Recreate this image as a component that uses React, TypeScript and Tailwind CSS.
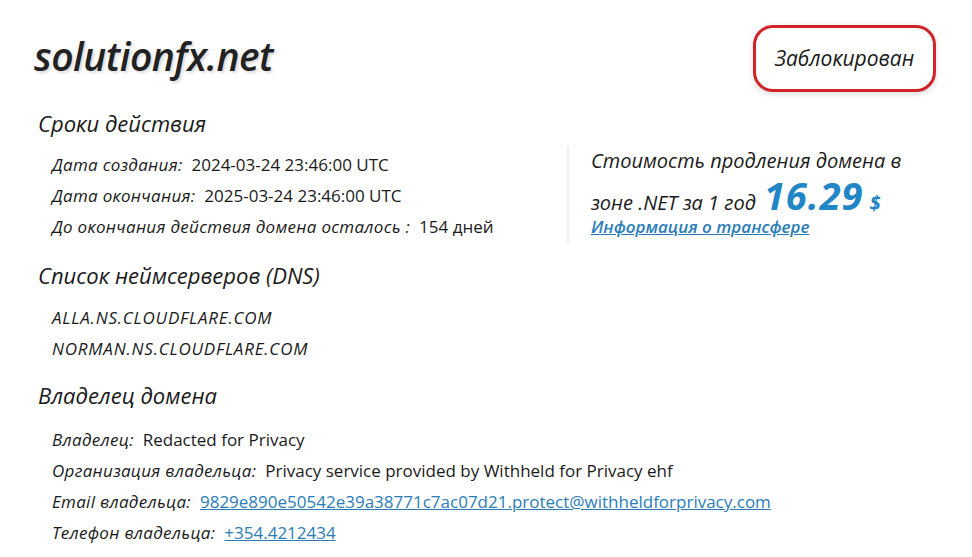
import React from 'react'

const font = { fontFamily: '"Open Sans", "Noto Sans", sans-serif' }

function Row({ label, children }: { label: string; children: React.ReactNode }) {
  return (
    <div className="flex h-[31px] items-center text-[17px] text-[#1a1a1a]">
      <span className="italic tracking-[0.3px]">{label}:</span>
      <span className="ml-[9px]">{children}</span>
    </div>
  )
}

export default function App() {
  return (
    <div className="h-[557px] w-[972px] overflow-hidden bg-white" style={font}>
      {/* Header */}
      <div className="flex items-start justify-between pl-[34px] pr-[36px] pt-[30px]">
        <h1 className="text-[39px] font-semibold italic leading-[52px] tracking-[-0.5px] text-[#222] [text-shadow:2px_2px_3px_rgba(0,0,0,0.15)]">
          solutionfx.net
        </h1>
        <div className="-mt-[5px] flex h-[67px] w-[183px] items-center justify-center rounded-[20px] border-[3px] border-[#d0242b] text-[21px] italic text-[#1a1a1a] shadow-[0_2px_6px_rgba(0,0,0,0.15)]">
          Заблокирован
        </div>
      </div>

      <div className="mt-[12px] flex pl-[38px]">
        {/* Left column */}
        <div className="w-[529px]">
          <h2 className="mt-[4px] text-[22px] italic leading-[30px] text-[#1a1a1a]">Сроки действия</h2>
          <div className="mt-[11px] pl-[14px]">
            <Row label="Дата создания">2024-03-24 23:46:00 UTC</Row>
            <Row label="Дата окончания">2025-03-24 23:46:00 UTC</Row>
            <div className="flex h-[31px] items-center text-[17px] text-[#1a1a1a]">
              <span className="italic tracking-[0.3px]">До окончания действия домена осталось :</span>
              <span className="ml-[9px]">154 дней</span>
            </div>
          </div>
        </div>

        {/* Right panel */}
        <div className="mt-[42px] h-[98px] border-l-2 border-[#eef0f3] pl-[22px]">
          <div className="mt-[1px] text-[20px] font-medium italic leading-[28px] text-[#1a1a1a]">Стоимость продления домена в</div>
          <div className="mt-[1px] flex h-[38px] items-baseline text-[20px] font-medium italic leading-[38px] text-[#1a1a1a]">
            зоне .NET за 1 год
            <span className="ml-[8px] text-[38px] font-bold tracking-[1px] text-[#2286c6]">16.29</span>
            <span className="ml-[6px] text-[20px] font-bold text-[#2286c6]">$</span>
          </div>
          <a href="#" className="block text-[17px] font-semibold italic leading-[26px] text-[#2a7db8] underline">
            Информация о трансфере
          </a>
        </div>
      </div>

      <div className="pl-[38px]">
        <h2 className="mt-[16px] text-[22px] italic leading-[30px] text-[#1a1a1a]">Список неймсерверов (DNS)</h2>
        <div className="mt-[12px] pl-[14px] text-[17px] italic tracking-[0.8px] text-[#1a1a1a]">
          <div className="flex h-[31px] items-center">ALLA.NS.CLOUDFLARE.COM</div>
          <div className="flex h-[31px] items-center">NORMAN.NS.CLOUDFLARE.COM</div>
        </div>

        <h2 className="mt-[16px] text-[22px] italic leading-[30px] text-[#1a1a1a]">Владелец домена</h2>
        <div className="mt-[14px] pl-[14px]">
          <Row label="Владелец">Redacted for Privacy</Row>
          <Row label="Организация владельца">Privacy service provided by Withheld for Privacy ehf</Row>
          <Row label="Email владельца">
            <a href="#" className="text-[#2a7db8] underline">9829e890e50542e39a38771c7ac07d21.protect@withheldforprivacy.com</a>
          </Row>
          <Row label="Телефон владельца">
            <a href="#" className="text-[#2a7db8] underline">+354.4212434</a>
          </Row>
        </div>
      </div>
    </div>
  )
}
